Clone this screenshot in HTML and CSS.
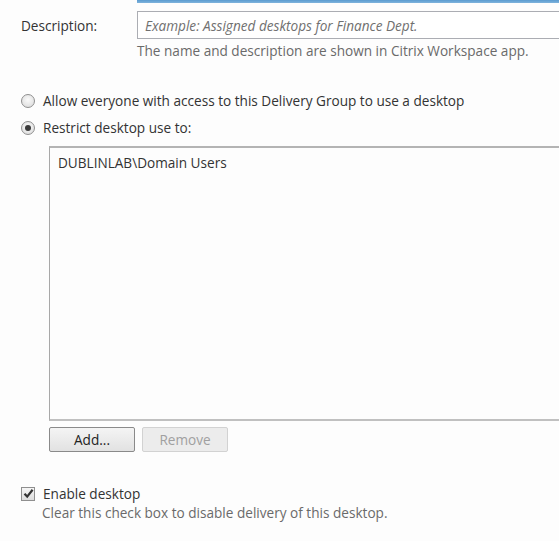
FILE: index.html
```html
<!DOCTYPE html>
<html>
<head>
<meta charset="utf-8">
<link rel="stylesheet" href="styles.css">
</head>
<body>
<div class="page">
  <div class="name-edge"></div>
  <div class="desc-row">
    <div class="label">Description:</div>
    <div class="textbox"><span class="placeholder">Example: Assigned desktops for Finance Dept.</span></div>
  </div>
  <div class="hint hint-desc">The name and description are shown in Citrix Workspace app.</div>

  <div class="radios">
    <div class="option">
      <span class="radio"></span>
      <span class="opt-text">Allow everyone with access to this Delivery Group to use a desktop</span>
    </div>
    <div class="option">
      <span class="radio checked"></span>
      <span class="opt-text">Restrict desktop use to:</span>
    </div>
  </div>

  <div class="listbox">
    <div class="list-item">DUBLINLAB\Domain Users</div>
  </div>

  <div class="buttons">
    <button class="btn">Add...</button>
    <button class="btn disabled">Remove</button>
  </div>

  <div class="enable">
    <div class="option">
      <span class="checkbox">
        <svg width="11" height="11" viewBox="0 0 11 11"><path d="M1.5 5.8 L4.2 8.6 L9.6 1.8" fill="none" stroke="#333" stroke-width="2.2"/></svg>
      </span>
      <span class="opt-text">Enable desktop</span>
    </div>
    <div class="hint hint-enable">Clear this check box to disable delivery of this desktop.</div>
  </div>
</div>
</body>
</html>
```

FILE: styles.css
```css
html, body {
  margin: 0;
  padding: 0;
  background: #fdfdfd;
}
body {
  width: 559px;
  height: 541px;
  overflow: hidden;
  font-family: "Open Sans", "Noto Sans", sans-serif;
  font-size: 13.6px;
  line-height: 17px;
  color: #333;
}
.page {
  display: flex;
  flex-direction: column;
}
.name-edge {
  margin-left: 137px;
  height: 3px;
  background: linear-gradient(#5a9bd0, #7fb3dc);
}
.desc-row {
  display: flex;
  align-items: center;
  margin-top: 8px;
}
.label {
  width: 116px;
  padding-left: 21px;
}
.textbox {
  flex: 1;
  height: 26px;
  border: 1px solid #abadb3;
  border-right: none;
  background: #fff;
  display: flex;
  align-items: center;
  padding-left: 7px;
}
.placeholder {
  font-style: italic;
  color: #707070;
}
.hint {
  color: #6a6a6a;
}
.hint-desc {
  margin-left: 137px;
  margin-top: 3px;
}
.radios {
  margin-top: 33px;
  display: flex;
  flex-direction: column;
  gap: 10px;
}
.option {
  display: flex;
  align-items: center;
  gap: 8px;
  margin-left: 21px;
  height: 17px;
}
.radio {
  width: 12px;
  height: 12px;
  border-radius: 50%;
  border: 1px solid #8f8f8f;
  background: radial-gradient(circle at 50% 40%, #fafafa, #d8d8d8);
  display: flex;
  align-items: center;
  justify-content: center;
}
.radio.checked::after {
  content: "";
  width: 6px;
  height: 6px;
  border-radius: 50%;
  background: #3a3a3a;
}
.listbox {
  margin-top: 10px;
  margin-left: 49px;
  height: 259px;
  border: 1px solid #a8a8a8;
  border-top: 2px solid #b4b4b4;
  border-bottom: 2px solid #c0c0c0;
  border-right: none;
  background: #fdfdfd;
  padding: 6px 8px;
}
.list-item {
  line-height: 17px;
}
.buttons {
  display: flex;
  gap: 7px;
  margin-left: 49px;
  margin-top: 6px;
}
.btn {
  width: 86px;
  height: 25px;
  font-family: inherit;
  font-size: 13.6px;
  color: #222;
  border: 1px solid #8a8a8a;
  border-radius: 2px;
  background: linear-gradient(#f4f4f4, #e2e2e2);
  padding: 0;
}
.btn.disabled {
  color: #a0a0a0;
  border-color: #d2d2d2;
  background: #ececec;
}
.enable {
  margin-top: 33px;
}
.checkbox {
  width: 12px;
  height: 12px;
  border: 1px solid #8f8f8f;
  background: linear-gradient(#f6f6f6, #dcdcdc);
  display: flex;
  align-items: center;
  justify-content: center;
}
.hint-enable {
  margin-left: 42px;
  margin-top: 2px;
}
```
